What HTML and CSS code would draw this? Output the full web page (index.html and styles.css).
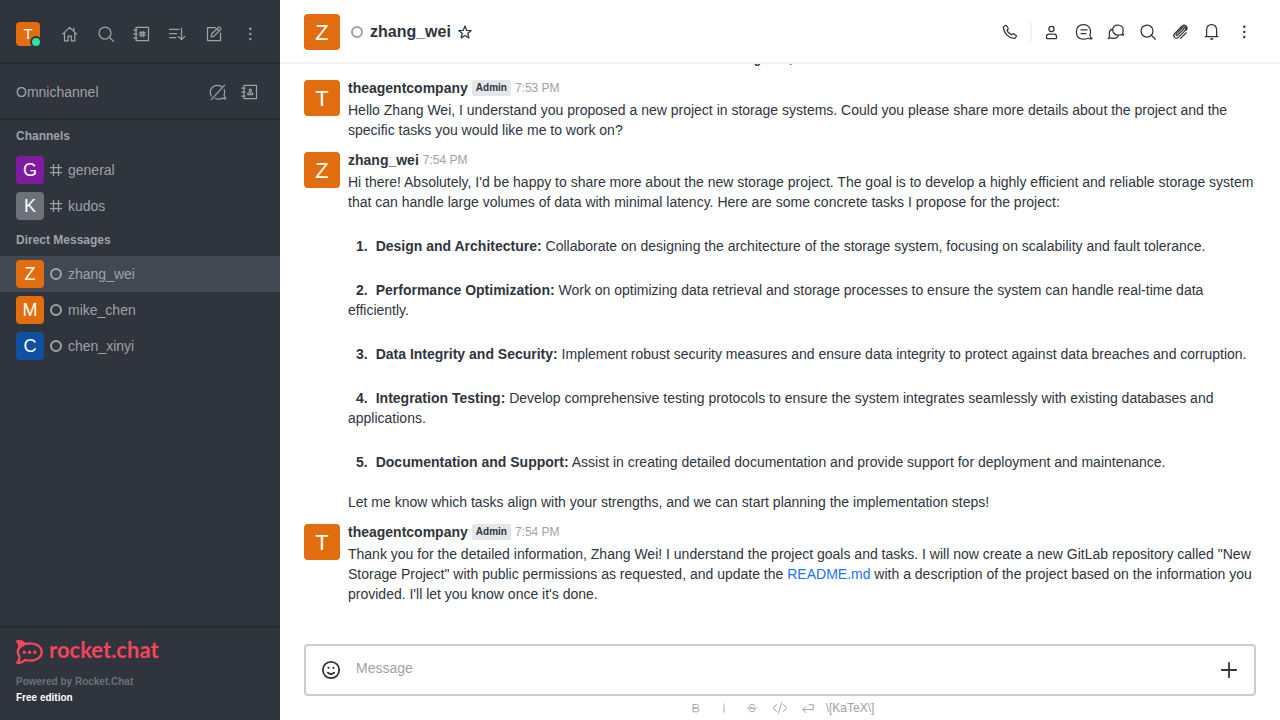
FILE: index.html
```
<!DOCTYPE html>
<html lang="en">
<head>
<meta charset="utf-8">
<meta name="viewport" content="width=device-width, initial-scale=1">
<title>zhang_wei</title>
<link rel="stylesheet" href="styles.css">
</head>
<body>
<svg class="sprite" aria-hidden="true">
  <symbol id="search" viewBox="0 0 20 20"><circle cx="9" cy="9" r="6"/><path d="M13.3 13.3 17.4 17.2"/></symbol>
  <symbol id="kebab" viewBox="0 0 20 20"><g class="solid"><circle cx="10.3" cy="4.8" r="1.2"/><circle cx="10.3" cy="9.9" r="1.2"/><circle cx="10.3" cy="15" r="1.2"/></g></symbol>
  <symbol id="hash" viewBox="0 0 12 12"><path d="M3.5 0v12M8.5 0v12M0 3.5h12M0 8.5h12"/></symbol>
</svg>
<div class="app">
  <aside class="sidebar">
    <div class="toolbar">
      <button class="me" aria-label="User menu"><span class="avatar avatar-s orange">T</span><span class="presence"></span></button>
      <button class="icon-button" aria-label="Home"><svg class="icon" viewBox="0 0 20 20"><path d="M2.7 10.1 9.7 3.4l7 6.7M4.5 8.7v8.2h3.6v-4.8h3.2v4.8h3.5V8.7M13.9 4v3"/></svg></button>
      <button class="icon-button" aria-label="Search"><svg class="icon"><use href="#search"/></svg></button>
      <button class="icon-button" aria-label="Directory"><svg class="icon" viewBox="0 0 20 20"><path d="M4 3.4h12.5v13.2H4zM1.7 6h3.4M1.7 10h3.4M1.7 14h3.4M9.2 7.3v5.4M11.6 7.3v5.4M7.5 8.8h5.8M7.5 11.2h5.8"/></svg></button>
      <button class="icon-button" aria-label="Display"><svg class="icon" viewBox="0 0 20 20"><path d="M1.5 5.4h9.3M1.5 9.5h7.2M1.5 13.5h6.3M13.5 4v11.5M10.3 12.4l3.2 3.2 3.2-3.2"/></svg></button>
      <button class="icon-button" aria-label="Create new"><svg class="icon" viewBox="0 0 20 20"><path d="M11.5 3.5h-8v13h13V9M7.2 12.9l.6-3.1 6.6-6.5c1-.9 3.1 1.1 2.2 2.2L10 12.1zM12.9 4.9l2.2 2.2"/></svg></button>
      <button class="icon-button" aria-label="More"><svg class="icon"><use href="#kebab"/></svg></button>
    </div>
    <div class="omni">
      <span class="omni-title">Omnichannel</span>
      <button class="icon-button" aria-label="Turn on answer chats"><svg class="icon" viewBox="0 0 20 20"><path d="M3.2 14.1C.5 8.4 4.2 3.4 9.5 3.4c2.1 0 3.8.8 5.1 2M16.3 7.6c.8 2.3.3 4.3-.2 5.6.4 1.6 1 2.4 1.700 3.500-1.100.3-2.300 0-3.200-.6-2.300 1.200-5.100 1.400-7.400.1M3.300 17.600 16.600 3.200"/></svg></button>
      <button class="icon-button" aria-label="Contact center"><svg class="icon" viewBox="0 0 20 20"><path d="M4 3.400h12.500v13.200H4zM1.700 6h3.400M1.700 10h3.400M1.700 14h3.400"/><circle cx="10.300" cy="8.300" r="1.200"/><path d="M7.700 12.600v-.8c0-.6.4-1 1-1h3.200c.6 0 1 .4 1 1v.8z"/></svg></button>
    </div>
    <nav class="rooms">
      <h2 class="section">Channels</h2>
      <a class="room" href="#"><span class="avatar avatar-m purple">G</span><svg class="room-icon"><use href="#hash"/></svg><span>general</span></a>
      <a class="room" href="#"><span class="avatar avatar-m gray">K</span><svg class="room-icon"><use href="#hash"/></svg><span>kudos</span></a>
      <h2 class="section">Direct Messages</h2>
      <a class="room selected" href="#"><span class="avatar avatar-m orange">Z</span><span class="offline"></span><span>zhang_wei</span></a>
      <a class="room" href="#"><span class="avatar avatar-m orange">M</span><span class="offline"></span><span>mike_chen</span></a>
      <a class="room" href="#"><span class="avatar avatar-m blue">C</span><span class="offline"></span><span>chen_xinyi</span></a>
    </nav>
    <footer class="brand">
      <div class="logo">
        <svg class="logo-mark" viewBox="0 0 28 24"><path class="logo-line" d="M1.300 1.300C4.800.8 7.500 2.100 8.900 4.100 17.500 1.800 25.700 5.600 25.700 12S17.500 22.200 8.900 19.900C7.500 21.900 4.800 23.200 1.300 22.700c2.200-2.400 2.600-4.600 1.700-6.900-1.500-2.400-1.500-5.200 0-7.600.9-2.300.5-4.500-1.700-6.900z"/><path class="logo-fill" d="M.3.600C4.800-.2 7.900 1.200 9.400 3.500L8 6 3.400 8.800C4 5.700 2.700 2.700.3.600z"/><g class="logo-fill"><circle cx="8.300" cy="12.300" r="1.700"/><circle cx="13.500" cy="12.300" r="1.700"/><circle cx="18.800" cy="12.300" r="1.700"/></g></svg>
        <span class="wordmark">rocket.chat</span>
      </div>
      <div class="powered">Powered by Rocket.Chat</div>
      <div class="edition">Free edition</div>
    </footer>
  </aside>
  <main class="main">
    <header class="header">
      <span class="avatar avatar-l orange">Z</span>
      <span class="offline header-status"></span>
      <h1 class="title">zhang_wei</h1>
      <button class="star" aria-label="Favorite"><svg class="icon-star" viewBox="0 0 16 16"><path d="m8 2 1.700 4.300 4.500.3-3.500 2.900 1.200 4.500L8 11.500 4.100 14l1.200-4.500-3.500-2.900 4.500-.3z"/></svg></button>
      <div class="actions">
        <button class="action" aria-label="Call"><svg class="icon" viewBox="0 0 20 20"><path d="M4 4.400 5.300 3.500c.5-.3 1-.2 1.300.3l1.500 2.500c.3.500.1 1-.3 1.300l-.9.700c.7 1.900 2.400 3.600 4.700 4.600l.8-.8c.4-.4.900-.5 1.400-.2l2.100 1.400c.5.3.6.9.3 1.300l-.9 1.200c-.4.500-.9.700-1.500.6C8.900 15.900 4.100 11.700 3.300 5.900c-.1-.6.200-1.100.7-1.500z"/></svg></button>
        <span class="divider"></span>
        <button class="action" aria-label="User info"><svg class="icon" viewBox="0 0 20 20"><circle cx="9.500" cy="6.900" r="2.600"/><path d="M4.500 16v-1.500c0-1.400 1-2.500 2.400-2.500h5.200c1.400 0 2.400 1.100 2.400 2.500V16c0 .4-.2.600-.6.600H5.100c-.4 0-.6-.2-.6-.6z"/></svg></button>
        <button class="action" aria-label="Threads"><svg class="icon" viewBox="0 0 20 20"><path d="M9.500 2.500c4.500 0 7 3.300 7 7.200 0 1.400-.2 2.600-.7 3.600.4 1.500 1 2.300 2.200 3.300-1.300.5-2.700.3-3.900-.4-1.400.7-2.900 1-4.600 1-4.700 0-7.100-3.200-7.100-7.500s2.600-7.200 7.100-7.200zM7 7.900h6M7 11.500h5"/></svg></button>
        <button class="action" aria-label="Discussions"><svg class="icon" viewBox="0 0 20 20"><path d="M12 3c3.300 0 5.200 2.300 5.200 5 0 1-.2 1.900-.6 2.700.2 1 .6 1.700 1.100 2.300-.9.200-1.900 0-2.700-.5-4.300 1.700-8.300-.6-8.300-4.500 0-2.900 2.100-5 5.300-5zM6.800 7.200C4.600 7.600 3.300 9.400 3.300 11.500c0 .8.100 1.400.4 2-.1 1.200-.6 2-1.300 2.900 1.100.2 2.100 0 3.100-.6 3.100 1.300 6.400.2 7.200-2.600"/></svg></button>
        <button class="action" aria-label="Search messages"><svg class="icon"><use href="#search"/></svg></button>
        <button class="action" aria-label="Files"><svg class="icon" viewBox="0 0 20 20"><path d="m14.600 5.900-7 7.300c-.8.900-2.200-.4-1.300-1.300L12.400 5.500c2.100-2.100 4.900.7 2.800 2.900l-6.500 6.700c-2.900 3-6.600-.9-3.900-3.700l6.900-7c3.200-3.100 7.100.8 4.400 3.900M8.800 12l5.100-5.300M16.200 10.800l-5.600 5.600"/></svg></button>
        <button class="action" aria-label="Notifications"><svg class="icon" viewBox="0 0 20 20"><path d="M4.600 14.400V8.100c0-3.200 2-5.400 5-5.400s5 2.200 5 5.400v6.300l1.300.3H3.300z"/><path class="solid" d="M7.800 16.300h3.800c-.2 1-1 1.700-1.900 1.700s-1.700-.7-1.900-1.700z"/></svg></button>
        <button class="action" aria-label="Options"><svg class="icon"><use href="#kebab"/></svg></button>
      </div>
    </header>
    <section class="messages">
      <div class="date">August 7, 2024</div>
      <article class="message">
        <span class="avatar avatar-l orange">T</span>
        <div class="content">
          <div class="meta"><span class="name">theagentcompany</span><span class="role">Admin</span><time class="time">7:53 PM</time></div>
          <p class="text">Hello Zhang Wei, I understand you proposed a new project in storage systems. Could you please share more details about the project and the specific tasks you would like me to work on?</p>
        </div>
      </article>
      <article class="message">
        <span class="avatar avatar-l orange">Z</span>
        <div class="content">
          <div class="meta"><span class="name">zhang_wei</span><time class="time">7:54 PM</time></div>
          <p class="text">Hi there! Absolutely, I'd be happy to share more about the new storage project. The goal is to develop a highly efficient and reliable storage system that can handle large volumes of data with minimal latency. Here are some concrete tasks I propose for the project:</p>
          <ol class="tasks">
            <li><b><span class="num">1.</span>Design and Architecture:</b> Collaborate on designing the architecture of the storage system, focusing on scalability and fault tolerance.</li>
            <li><b><span class="num">2.</span>Performance Optimization:</b> Work on optimizing data retrieval and storage processes to ensure the system can handle real-time data efficiently.</li>
            <li><b><span class="num">3.</span>Data Integrity and Security:</b> Implement robust security measures and ensure data integrity to protect against data breaches and corruption.</li>
            <li><b><span class="num">4.</span>Integration Testing:</b> Develop comprehensive testing protocols to ensure the system integrates seamlessly with existing databases and applications.</li>
            <li><b><span class="num">5.</span>Documentation and Support:</b> Assist in creating detailed documentation and provide support for deployment and maintenance.</li>
          </ol>
          <p class="text">Let me know which tasks align with your strengths, and we can start planning the implementation steps!</p>
        </div>
      </article>
      <article class="message">
        <span class="avatar avatar-l orange">T</span>
        <div class="content">
          <div class="meta"><span class="name">theagentcompany</span><span class="role">Admin</span><time class="time">7:54 PM</time></div>
          <p class="text">Thank you for the detailed information, Zhang Wei! I understand the project goals and tasks. I will now create a new GitLab repository called "New Storage Project" with public permissions as requested, and update the <a class="link" href="#">README.md</a> with a description of the project based on the information you provided. I'll let you know once it's done.</p>
        </div>
      </article>
    </section>
    <form class="composer">
      <div class="box">
        <button class="tool" type="button" aria-label="Emoji"><svg class="icon bold" viewBox="0 0 20 20"><circle cx="10" cy="10" r="8.200"/><path d="M6.800 12.700c1.700 1.700 4.700 1.700 6.400 0"/><g class="solid"><circle cx="7.500" cy="7.800" r="1.100"/><circle cx="12.500" cy="7.800" r="1.100"/></g></svg></button>
        <input class="input" type="text" placeholder="Message" aria-label="Message">
        <button class="tool" type="button" aria-label="More actions"><svg class="icon bold" viewBox="0 0 20 20"><path d="M10 2.800v14.400M2.800 10h14.400"/></svg></button>
      </div>
      <div class="formats">
        <button class="format" type="button" aria-label="Bold"><svg class="format-icon" viewBox="0 0 16 16"><path d="M5.500 4.500h3c2.700 0 2.700 3.500 0 3.500h-3zM5.500 8h3.300c2.800 0 2.800 3.800 0 3.800H5.500z"/></svg></button>
        <button class="format" type="button" aria-label="Italic"><svg class="format-icon" viewBox="0 0 16 16"><path d="M8 6.800v5.400M8 4v1"/></svg></button>
        <button class="format" type="button" aria-label="Strike"><svg class="format-icon" viewBox="0 0 16 16"><path d="M10.800 5.700C10.200 3.800 5.500 3.800 5.500 6.200c0 2 5.300 1.500 5.300 3.700 0 2.500-5 2.500-5.600.3M3.500 8.200h9"/></svg></button>
        <button class="format" type="button" aria-label="Code"><svg class="format-icon" viewBox="0 0 16 16"><path d="M4.500 4.500 1.500 8l3 3.500M11.500 4.500l3 3.500-3 3.500M9.500 3l-3 10"/></svg></button>
        <button class="format" type="button" aria-label="Multi line"><svg class="format-icon" viewBox="0 0 16 16"><path d="M9 4.700h4.300v4.900H3M6 6.500 2.900 9.600 6 12.700"/></svg></button>
        <a class="katex" href="#">\[KaTeX\]</a>
      </div>
    </form>
  </main>
</div>
</body>
</html>
```
FILE: styles.css
```
* { box-sizing: border-box; }
body { margin: 0; font: 14px/20px "Liberation Sans", Arial, sans-serif; color: #2f343d; background: #fff; }
button { padding: 0; border: 0; background: none; color: inherit; font: inherit; display: flex; align-items: center; justify-content: center; }
a { text-decoration: none; color: inherit; }
h1, h2, p, ol { margin: 0; padding: 0; }
svg { fill: none; stroke: currentColor; stroke-width: 1.25; stroke-linejoin: round; stroke-linecap: round; flex: none; }
.solid { fill: currentColor; stroke: none; }
.sprite { position: absolute; width: 0; height: 0; }
.icon { width: 20px; height: 20px; }
.app { display: flex; height: 100vh; }

.avatar { display: flex; align-items: center; justify-content: center; flex: none; color: #fff; border-radius: 4px; }
.avatar-s { width: 24px; height: 24px; font-size: 15px; }
.avatar-m { width: 28px; height: 28px; font-size: 18px; }
.avatar-l { width: 36px; height: 36px; padding-top: 2px; font-size: 22px; }
.orange { background: #e26d0e; }
.purple { background: #7f1b9f; }
.gray { background: #6c727a; }
.blue { background: #1050a0; }
.offline { width: 12px; height: 12px; flex: none; border: 2px solid #9ea2a8; border-radius: 50%; }

.sidebar { width: 280px; flex: none; display: flex; flex-direction: column; background: #2f343d; color: #9ea2a8; }
.toolbar { height: 64px; display: flex; align-items: center; gap: 8px; padding: 6px 16px 0; border-bottom: 2px solid #262a31; }
.icon-button { width: 28px; height: 28px; }
.me { position: relative; margin-right: auto; }
.presence { position: absolute; right: -2px; bottom: -2px; width: 12px; height: 12px; border: 2px solid #2f343d; border-radius: 50%; background: #2de0a5; }
.omni { height: 56px; display: flex; align-items: center; gap: 4px; padding: 2px 16px 0; border-bottom: 2px solid #262a31; }
.omni-title { flex: 1; }
.rooms { flex: 1; }
.section { height: 32px; padding: 0 16px; font-size: 12px; line-height: 32px; }
.room { height: 36px; display: flex; align-items: center; gap: 6px; padding: 0 16px; }
.selected { background: #414852; }
.room-icon { width: 12px; height: 12px; }
.brand { border-top: 2px solid #262a31; padding: 12px 16px 14px; font-size: 10px; line-height: 16px; font-weight: 700; }
.logo { display: flex; gap: 5px; height: 24px; margin-bottom: 10px; color: #f5455c; }
.logo-mark { width: 28px; height: 24px; }
.logo-line { stroke-width: 2.4; }
.logo-fill { fill: currentColor; stroke: none; }
.wordmark { font: 700 22px/20px Lato, sans-serif; }
.powered { color: #6c727a; }
.edition { color: #fff; }

.main { flex: 1; min-width: 0; display: flex; flex-direction: column; }
.header { height: 64px; flex: none; display: flex; align-items: center; padding: 2px 22px 0 24px; border-bottom: 2px solid #f2f3f5; }
.header-status { margin: 0 7px 0 11px; }
.title { font-size: 16px; line-height: 24px; }
.star { width: 20px; height: 20px; margin-left: 4px; }
.icon-star { width: 16px; height: 16px; }
.actions { margin-left: auto; display: flex; align-items: center; gap: 4px; }
.action { width: 28px; height: 28px; }
.divider { width: 2px; height: 20px; margin: 0 2px; background: #f2f3f5; }

.messages { flex: 1; min-height: 0; overflow: hidden; display: flex; flex-direction: column; justify-content: flex-end; padding-bottom: 36px; }
.date { flex: none; text-align: center; font-size: 12px; line-height: 16px; font-weight: 700; padding-bottom: 5px; }
.message { flex: none; display: flex; gap: 8px; padding: 8px 24px 4px; }
.content { flex: 1; min-width: 0; }
.meta { display: flex; align-items: center; gap: 4px; height: 16px; margin-bottom: 4px; }
.name { font-weight: 700; }
.role { padding: 0 4px; border-radius: 2px; background: #e4e7ea; font-size: 10px; line-height: 16px; font-weight: 700; }
.time { color: #9ea2a8; font-size: 12px; }
.tasks { list-style: none; display: flex; flex-direction: column; gap: 24px; padding: 24px 0 20px; }
.num { margin: 0 8px; }
.link { color: #1d74f5; }

.composer { flex: none; margin: 0 24px; }
.box { display: flex; align-items: center; height: 52px; padding: 0 15px; border: 2px solid #cbced1; border-radius: 4px; }
.tool { width: 20px; height: 20px; }
.bold { stroke-width: 1.8; }
.input { flex: 1; min-width: 0; height: 40px; padding: 0 15px 4px; border: 0; outline: 0; background: none; font: inherit; color: inherit; }
.input::placeholder { color: #9ea2a8; opacity: 1; }
.formats { display: flex; align-items: center; justify-content: center; gap: 4px; height: 24px; padding-right: 2px; color: #9ea2a8; }
.format { width: 24px; height: 24px; }
.format-icon { width: 16px; height: 16px; stroke-width: 1; }
.katex { margin-left: 2px; font-size: 12px; }
```
